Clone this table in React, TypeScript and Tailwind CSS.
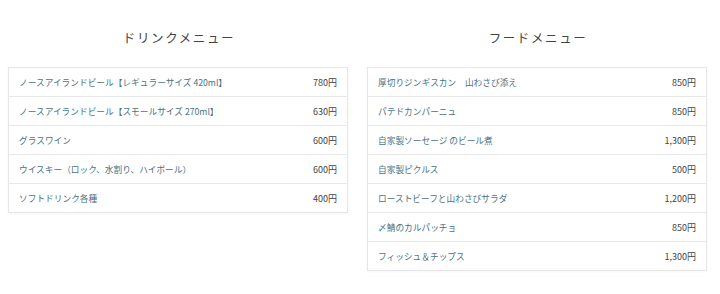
import React from "react";

const drinks: [string, string][] = [
  ["ノースアイランドビール【レギュラーサイズ 420ml】", "780円"],
  ["ノースアイランドビール【スモールサイズ 270ml】", "630円"],
  ["グラスワイン", "600円"],
  ["ウイスキー（ロック、水割り、ハイボール）", "600円"],
  ["ソフトドリンク各種", "400円"],
];

const foods: [string, string][] = [
  ["厚切りジンギスカン　山わさび添え", "850円"],
  ["パテドカンパーニュ", "850円"],
  ["自家製ソーセージ のビール煮", "1,300円"],
  ["自家製ピクルス", "500円"],
  ["ローストビーフと山わさびサラダ", "1,200円"],
  ["〆鯖のカルパッチョ", "850円"],
  ["フィッシュ＆チップス", "1,300円"],
];

function Menu({ title, items }: { title: string; items: [string, string][] }) {
  return (
    <div className="flex-1 flex flex-col">
      <h2 className="h-[18px] leading-[18px] text-center text-[12.5px] tracking-[1.6px] text-[#444] font-normal mb-[20px] pl-[2px]">
        {title}
      </h2>
      <div className="border border-[#e6e6e6] shadow-[0_1px_2px_rgba(0,0,0,0.04)] bg-white">
        {items.map(([name, price], i) => (
          <div
            key={i}
            className={
              "flex items-center justify-between px-[10px] text-[8.7px] " +
              (i > 0 ? "h-[29px] border-t border-[#e8e8e8]" : "h-[28px]")
            }
          >
            <span className="text-[#4a7382] pt-[1px]">{name}</span>
            <span className="text-[#444] text-[9px] pt-[1px]">{price}</span>
          </div>
        ))}
      </div>
    </div>
  );
}

export default function App() {
  return (
    <div
      className="w-[720px] h-[294px] bg-white flex gap-[19px] pl-[8px] pr-[13px] pt-[29px]"
      style={{ fontFamily: '"Noto Sans CJK JP", "Noto Sans", sans-serif' }}
    >
      <Menu title="ドリンクメニュー" items={drinks} />
      <Menu title="フードメニュー" items={foods} />
    </div>
  );
}
